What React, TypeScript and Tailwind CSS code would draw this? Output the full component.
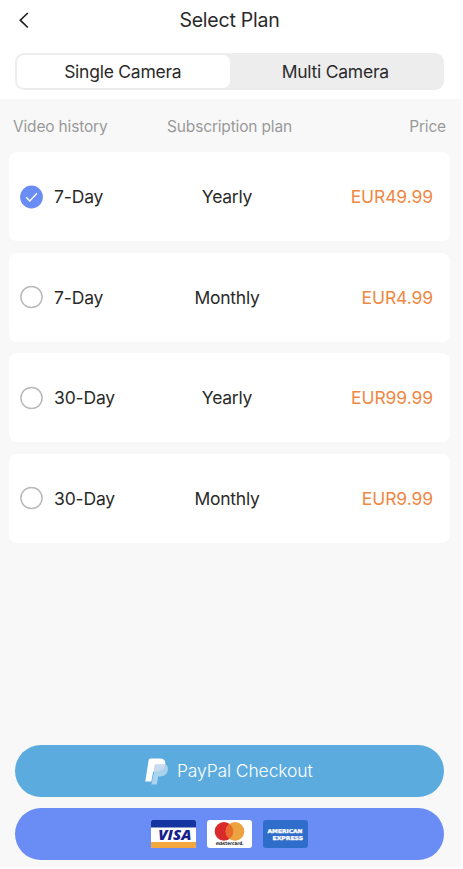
import React, { useState } from 'react';

interface Plan {
  id: string;
  history: string;
  period: string;
  price: string;
}

const PLANS: Plan[] = [
  { id: '7-yearly', history: '7-Day', period: 'Yearly', price: 'EUR49.99' },
  { id: '7-monthly', history: '7-Day', period: 'Monthly', price: 'EUR4.99' },
  { id: '30-yearly', history: '30-Day', period: 'Yearly', price: 'EUR99.99' },
  { id: '30-monthly', history: '30-Day', period: 'Monthly', price: 'EUR9.99' },
];

const TABS = ['Single Camera', 'Multi Camera'];

const Radio: React.FC<{ checked: boolean }> = ({ checked }) => (
  <svg className="w-[24px] h-[24px] shrink-0" viewBox="0 0 24 24" fill="none">
    {checked ? (
      <>
        <circle cx="11.5" cy="12" r="11.4" fill="#6a8df5" />
        <path d="M6.1 12.2l3.7 3.8 7.2-7.8" stroke="#fff" strokeWidth="1.3" />
      </>
    ) : (
      <circle cx="11.5" cy="12" r="10.6" fill="#fff" stroke="#b9b9b9" strokeWidth="1.5" />
    )}
  </svg>
);

const PlanRow: React.FC<{ plan: Plan; checked: boolean; onSelect: () => void }> = ({ plan, checked, onSelect }) => (
  <button
    onClick={onSelect}
    className="w-full h-[89.2px] bg-white rounded-[8px] pl-[11px] pr-[16.5px] grid grid-cols-[134px_146px_1fr] items-center text-[17.5px] leading-[26px]"
  >
    <span className="flex items-center gap-[10px] tracking-[-0.15px]">
      <Radio checked={checked} />
      <span className="pt-[1px]">{plan.history}</span>
    </span>
    <span className="text-center tracking-[-0.25px] pt-[1px]">{plan.period}</span>
    <span className="text-right text-[#ee8844] tracking-[-0.1px] pt-[1px]">{plan.price}</span>
  </button>
);

const PayPalLogo = () => (
  <svg className="w-[23px] h-[27px]" viewBox="0 0 23 27">
    <path d="M5.6 0.6h9.400c3.800 0 5.800 2.200 5.300 6.100-.7 4.600-4.100 6.700-8.200 6.700H8.200L6.300 23.600H1.100q-.9 0-.7-.9L3.600 2.200Q3.900.6 5.600.6z" fill="#fff" />
    <path d="M10.800 6.600h9.600c2.100.8 2.900 2.800 2.400 5.700-.8 4.300-3.600 6.200-7.600 6.200h-2l-1.200 7.200q-.2.900-1 .9H6.300z" fill="#a9d2ee" />
    <path d="M10.400 6.600h9.900c-.7 4.600-4.100 6.800-8.200 6.800H8.800l.6-5.800q.1-1 1-1z" fill="#c6dbee" />
  </svg>
);

const VisaCard = () => (
  <svg className="w-[45px] h-[28px]" viewBox="0 0 45 28">
    <rect width="45" height="28" rx="1.5" fill="#fff" />
    <path d="M0 7.6V1.5Q0 0 1.5 0h42Q45 0 45 1.500v6.100z" fill="#1434a0" />
    <path d="M0 22h45v4.500q0 1.500-1.500 1.500h-42Q0 28 0 26.500z" fill="#f2a73f" />
    <text x="23.800" y="20" textAnchor="middle" textLength="33" lengthAdjust="spacingAndGlyphs" fontFamily="Open Sans, sans-serif" fontSize="14.500" fontWeight="800" fontStyle="italic" fill="#16208c">VISA</text>
  </svg>
);

const MastercardCard = () => (
  <svg className="w-[45px] h-[28px]" viewBox="0 0 45 28">
    <rect width="45" height="28" rx="3" fill="#fff" />
    <circle cx="17" cy="11.4" r="9.3" fill="#d92b2b" />
    <circle cx="28" cy="11.4" r="9.3" fill="#eda340" />
    <path d="M22.500 3.900a9.300 9.300 0 0 1 0 15a9.300 9.300 0 0 1 0-15z" fill="#ec6a2e" />
    <text x="22.700" y="25.200" textAnchor="middle" textLength="28" lengthAdjust="spacingAndGlyphs" fontFamily="DejaVu Sans, sans-serif" fontSize="4.800" fontWeight="700" fill="#222">mastercard.</text>
  </svg>
);

const AmexCard = () => (
  <svg className="w-[45px] h-[28px]" viewBox="0 0 45 28">
    <rect width="45" height="28" rx="3" fill="#2f6dcb" />
    <g fontFamily="DejaVu Sans, sans-serif" fontSize="5.2" fontWeight="700" fill="#fff" stroke="#fff" strokeWidth="0.300">
      <text x="4.500" y="13.400" textLength="35" lengthAdjust="spacingAndGlyphs">AMERICAN</text>
      <text x="9.500" y="19.500" textLength="30.500" lengthAdjust="spacingAndGlyphs">EXPRESS</text>
    </g>
  </svg>
);

export default function App() {
  const [tab, setTab] = useState(0);
  const [selected, setSelected] = useState(PLANS[0].id);

  return (
    <div className="w-[461px] h-[867px] bg-[#f8f8f8] flex flex-col overflow-hidden font-['Inter',sans-serif] text-[#2a2a2a]">
      <header className="h-[99px] bg-white shrink-0">
        <div className="h-[53px] pl-[18px] pr-[20px] pt-[5px] grid grid-cols-[24px_1fr_24px] items-start">
          <button className="h-[30px] flex items-center" aria-label="Back">
            <svg className="w-[12px] h-[18px]" viewBox="0 0 12 18" fill="none" stroke="#222" strokeWidth="1.7">
              <path d="M9.800 2L2.300 9.200l7.500 7.300" />
            </svg>
          </button>
          <h1 className="text-center text-[19.5px] leading-[30px] tracking-[-0.22px]">Select Plan</h1>
        </div>
        <div className="ml-[15px] w-[429px] h-[37px] p-[2px] bg-[#ededed] rounded-[9px] flex">
          {TABS.map((label, i) => (
            <button
              key={label}
              onClick={() => setTab(i)}
              className={`flex-1 rounded-[7px] pt-[1px] pr-[1px] text-[17.5px] tracking-[-0.25px] ${tab === i ? 'bg-white' : ''}`}
            >
              {label}
            </button>
          ))}
        </div>
      </header>

      <div className="h-[53px] pt-[2px] shrink-0 pl-[13px] pr-[15px] grid grid-cols-[124px_185px_1fr] items-center text-[15.5px] tracking-[-0.17px] text-[#9a9a9a]">
        <span>Video history</span>
        <span className="text-center">Subscription plan</span>
        <span className="text-right">Price</span>
      </div>

      <main className="ml-[9px] w-[440.5px] flex flex-col gap-[11.4px]">
        {PLANS.map((plan) => (
          <PlanRow key={plan.id} plan={plan} checked={selected === plan.id} onSelect={() => setSelected(plan.id)} />
        ))}
      </main>

      <footer className="mt-auto ml-[15px] w-[429px] pb-[6.7px] flex flex-col gap-[11px]">
        <button className="h-[52px] pr-[1.5px] rounded-full bg-[#5babdf] text-white text-[17.5px] font-[350] tracking-[-0.12px] flex items-center justify-center gap-[9px]">
          <PayPalLogo />
          PayPal Checkout
        </button>
        <button className="h-[52px] rounded-full bg-[#6a8df5] flex items-center justify-center gap-[11px]">
          <VisaCard />
          <MastercardCard />
          <AmexCard />
        </button>
      </footer>
    </div>
  );
}
